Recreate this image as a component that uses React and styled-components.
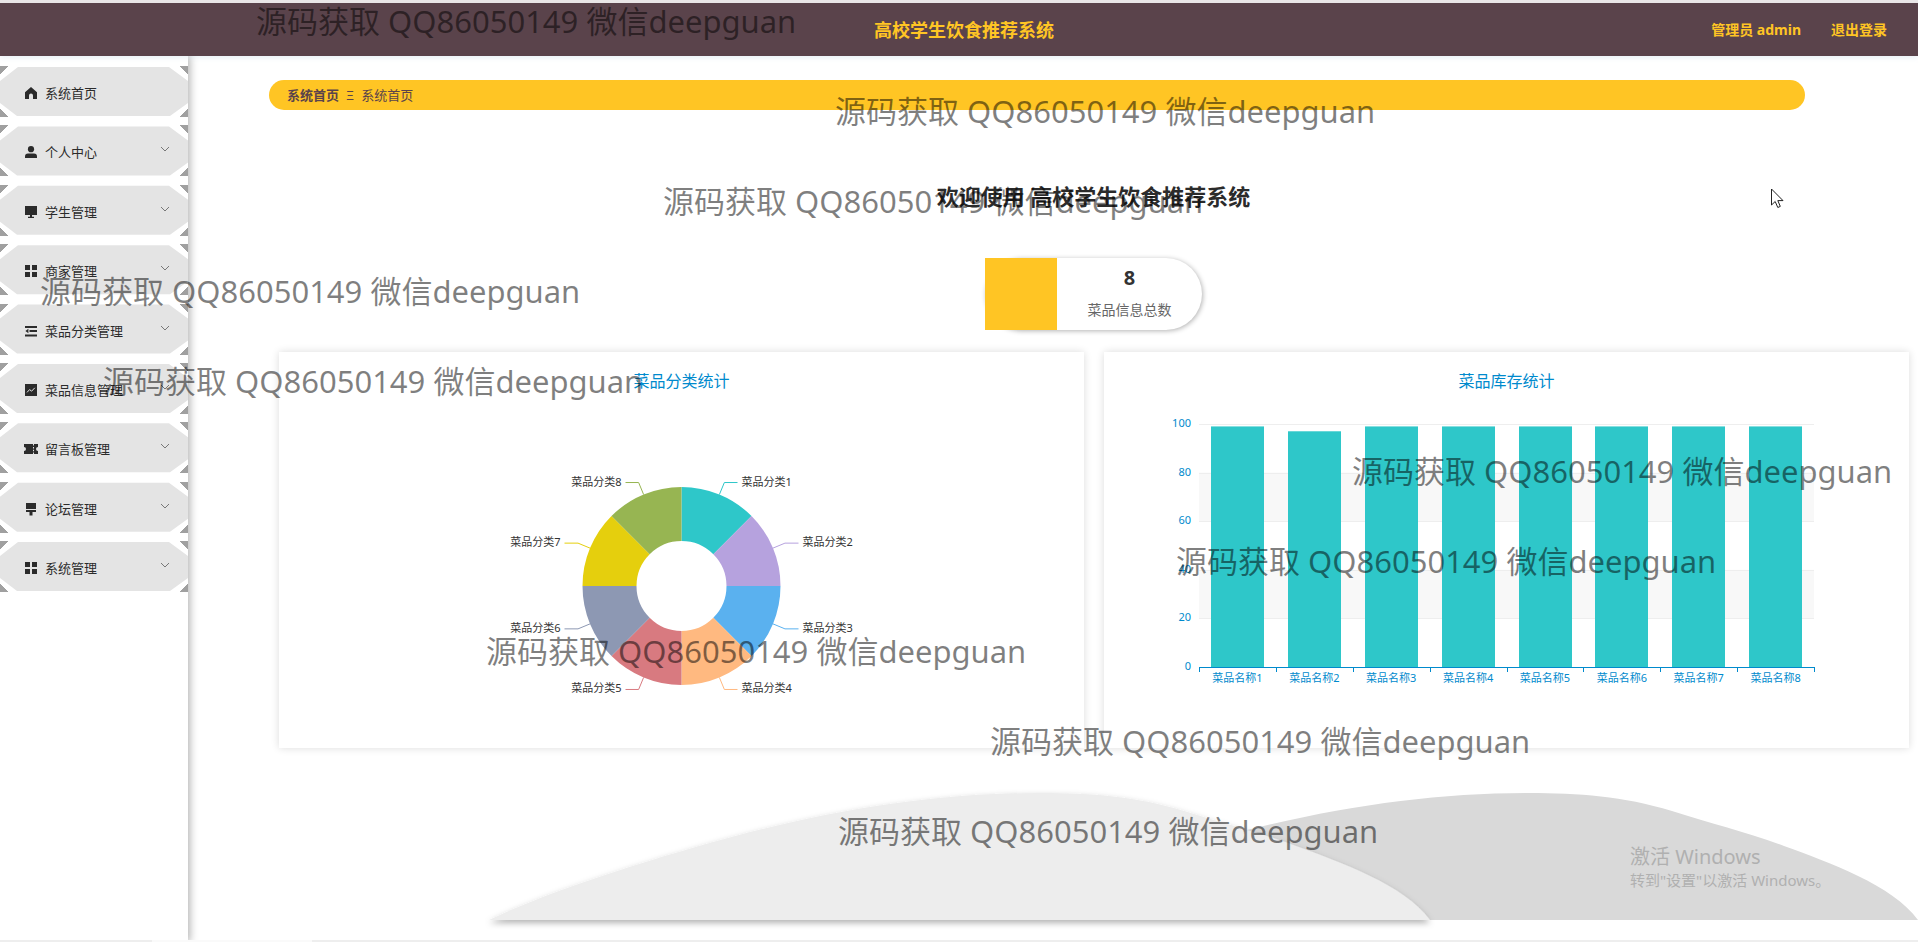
import React from "react";
import styled, { createGlobalStyle } from "styled-components";

const colors = {
  header: "#5a434b",
  accent: "#ffc524",
  axis: "#008acd",
  teal: "#2ec7c9",
};

const GlobalStyle = createGlobalStyle`
  *, *::before, *::after { box-sizing: border-box; }
  body {
    margin: 0;
    background: #fff;
    color: #333;
    font-family: "Noto Sans", "Noto Sans CJK SC", sans-serif;
    font-size: 13px;
  }
  h1, h2, p, ul, ol { margin: 0; padding: 0; }
  ul, ol { list-style: none; }
  a { color: inherit; text-decoration: none; }
`;

const Page = styled.div`
  position: relative;
  display: flex;
  flex-direction: column;
  min-height: 100vh;
  overflow: hidden;
`;

const Header = styled.header`
  display: grid;
  grid-template-columns: 1fr auto 1fr;
  align-items: center;
  height: 56px;
  padding: 0 31px 0 41px;
  border-top: 3px solid #e9e6e7;
  background: ${colors.header};
  color: ${colors.accent};
  font-weight: 700;
  box-shadow: 0 1px 6px rgba(120, 160, 200, 0.2);
`;

const SiteName = styled.p`
  grid-column: 2;
  font-size: 18px;
  line-height: 26px;
`;

const Account = styled.div`
  display: flex;
  justify-content: flex-end;
  gap: 30px;
  font-size: 14px;
  line-height: 20px;
`;

const Body = styled.div`
  display: flex;
  flex: 1;
`;

const Sidebar = styled.nav`
  flex: none;
  width: 188px;
  padding-top: 10px;
  box-shadow: 2px 0 8px rgba(0, 0, 0, 0.3);
  clip-path: inset(0 -12px 0 0);
`;

const Menu = styled.ul`
  display: flex;
  flex-direction: column;
  justify-content: space-between;
  height: 526px;
`;

const corner = (direction, place) =>
  `linear-gradient(to ${direction}, #a0a0a0 50%, transparent 50%) ${place} / 9px 8px no-repeat`;

const MenuButton = styled.button`
  position: relative;
  isolation: isolate;
  display: flex;
  align-items: center;
  gap: 8px;
  width: 100%;
  height: 51px;
  padding: 3px 18px 0 25px;
  border: 0;
  background:
    ${corner("bottom right", "left top")},
    ${corner("bottom left", "right top")},
    ${corner("top right", "left bottom")},
    ${corner("top left", "right bottom")};
  color: #2b2b2b;
  font: inherit;
  line-height: 20px;
  text-align: left;
  cursor: pointer;

  &::before {
    content: "";
    position: absolute;
    inset: 0;
    z-index: -1;
    background: #e4e4e4;
    clip-path: polygon(18px 1px, 169px 1px, 100% 15px, 100% 37px, 170px 50px, 17px 50px, 0 37px, 0 15px);
  }
`;

const MenuIcon = styled.svg`
  flex: none;
  width: 12px;
  height: 12px;
  fill: #2b2b2b;
`;

const Chevron = styled.svg`
  width: 10px;
  height: 6px;
  margin: 0 0 6px auto;
  fill: none;
  stroke: #777;
`;

const Main = styled.main`
  display: flex;
  flex: 1;
  flex-direction: column;
  min-width: 0;
  padding: 24px 0 8px 81px;
`;

const Breadcrumb = styled.ol`
  display: flex;
  align-items: center;
  gap: 7px;
  height: 30px;
  margin-right: 113px;
  padding: 0 18px;
  border-radius: 15px;
  background: ${colors.accent};
  color: ${colors.header};
  line-height: 20px;
`;

const Crumb = styled.li`
  font-weight: ${(p) => (p.$strong ? 700 : 400)};
`;

const Separator = styled.li`
  font-size: 13px;
`;

const Welcome = styled.h1`
  margin-top: 71px;
  font-size: 22px;
  line-height: 30px;
  text-align: center;
  color: #2b2b2b;
`;

const Stat = styled.section`
  display: flex;
  align-self: center;
  width: 217px;
  height: 72px;
  margin-top: 47px;
  border-radius: 36px;
  background: #fff;
  box-shadow: 1px 1px 5px rgba(0, 0, 0, 0.3);
`;

const StatBlock = styled.div`
  width: 72px;
  background: ${colors.accent};
`;

const StatText = styled.div`
  display: flex;
  flex: 1;
  flex-direction: column;
  justify-content: center;
  gap: 8px;
  text-align: center;
`;

const StatValue = styled.strong`
  font-size: 20px;
  line-height: 24px;
`;

const StatLabel = styled.span`
  color: #666;
  font-size: 14px;
  line-height: 24px;
`;

const Charts = styled.div`
  display: grid;
  grid-template-columns: 1fr 1fr;
  gap: 20px;
  margin-top: 22px;
  padding: 0 9px 0 10px;
`;

const ChartCard = styled.section`
  background: #fff;
  box-shadow: 0 0 8px rgba(0, 0, 0, 0.14);
`;

const ChartTitle = styled.h2`
  height: 60px;
  color: ${colors.axis};
  font-size: 16px;
  font-weight: 400;
  line-height: 58px;
  text-align: center;
`;

const Plot = styled.svg`
  display: block;
  width: 100%;
  height: auto;
  font-size: 11px;
`;

const Hills = styled.svg`
  display: block;
  align-self: flex-end;
  width: 100%;
  max-width: 1438px;
  height: auto;
  margin-top: 36px;
`;

const BottomEdge = styled.div`
  position: absolute;
  inset: auto 0 0;
  height: 2px;
  background: linear-gradient(to right, #eee 152px, #fafafa 152px 312px, #eee 312px);
`;

const Overlay = styled.div`
  position: absolute;
  inset: 0;
  overflow: hidden;
  pointer-events: none;
`;

const WatermarkLine = styled.p`
  height: 90px;
  padding-left: ${(p) => p.$indent}px;
  color: rgba(0, 0, 0, 0.5);
  font-size: 31px;
  line-height: 90px;
  white-space: nowrap;

  &:first-child {
    margin-top: -24px;
  }
`;

const Activation = styled.aside`
  position: absolute;
  right: 0;
  bottom: 52px;
  width: 288px;
  color: #b0b0b0;
  font-size: 15px;
  line-height: 20px;
`;

const ActivationTitle = styled.p`
  font-size: 20px;
  line-height: 26px;
`;

const Pointer = styled.svg`
  position: absolute;
  top: 188px;
  right: 134px;
  width: 13px;
  height: 21px;
`;

const icons = {
  home: <path d="M6 0 12 5.2V12H8V8.6a2 2 0 0 0-4 0V12H0V5.2Z" />,
  user: (
    <>
      <circle cx="6" cy="3.2" r="3.1" />
      <path d="M0 12V10.4Q0 7.4 3 7.4H9Q12 7.4 12 10.4V12Z" />
    </>
  ),
  platform: <path d="M0 0H12V9H7V10.8H9V12H3V10.8H5V9H0Z" />,
  grid: <path d="M0 0H5V5H0ZM7 0H12V5H7ZM0 7H5V12H0ZM7 7H12V12H7Z" />,
  fold: <path d="M0 1H12V3H0ZM4.5 5H12V7H4.5ZM0 9.4H12V11.4H0ZM3.4 3.8V8.2L.4 6Z" />,
  chart: (
    <>
      <path d="M0 0H12V12H0Z" />
      <path d="M2 8.4 4.6 5.6 6.6 7.2 9.8 3.8" fill="none" stroke="#e4e4e4" />
    </>
  ),
  ticket: (
    <path d="M-1 1H8V2.6H9V1H13V4Q11 4.200 11 6T13 8V11H9V9.4H8V11H-1V8Q1 7.800 1 6T-1 4ZM8 4V5.400H9V4ZM8 6.800V8.200H9V6.800Z" />
  ),
  brush: <path d="M1 0H11V6H1ZM1 7H11V9H7.500V12.400H4.500V9H1Z" />,
};

const menu = [
  { label: "系统首页", icon: "home", leaf: true },
  { label: "个人中心", icon: "user" },
  { label: "学生管理", icon: "platform" },
  { label: "商家管理", icon: "grid" },
  { label: "菜品分类管理", icon: "fold" },
  { label: "菜品信息管理", icon: "chart" },
  { label: "留言板管理", icon: "ticket" },
  { label: "论坛管理", icon: "brush" },
  { label: "系统管理", icon: "grid" },
];

const watermarkIndents = [256, 835, 663, 40, 103, 1352, 1176, 486, 990, 838];

const sliceColors = [
  "#2ec7c9", "#b6a2de", "#5ab1ef", "#ffb980",
  "#d87a80", "#8d98b3", "#e5cf0d", "#97b552",
];

const CX = 402.5;
const CY = 234;

const polar = (radius, turn) => {
  const angle = turn * 2 * Math.PI;
  return [CX + radius * Math.sin(angle), CY - radius * Math.cos(angle)];
};

function slicePath(index) {
  const [from, to] = [index / 8, (index + 1) / 8];
  return `M${polar(99, from)}A99 99 0 0 1 ${polar(99, to)}L${polar(45, to)}A45 45 0 0 0 ${polar(45, from)}Z`;
}

function Slice({ index, color }) {
  const middle = (index + 0.5) / 8;
  const side = index < 4 ? 1 : -1;
  const [startX, startY] = polar(99, middle);
  const [elbowX, elbowY] = polar(112, middle);
  const near = [0, 3, 4, 7].includes(index);
  const endX = CX + side * (near ? 56 : 117);
  return (
    <g>
      <path d={slicePath(index)} fill={color} />
      <path d={`M${startX} ${startY}L${elbowX} ${elbowY}H${endX}`} fill="none" stroke={color} />
      <text x={endX + side * 4} y={elbowY + 3} fill="#333" textAnchor={side > 0 ? "start" : "end"}>
        {`菜品分类${index + 1}`}
      </text>
    </g>
  );
}

function PieChart() {
  return (
    <Plot viewBox="0 60 805 336" role="img" aria-label="菜品分类统计">
      {sliceColors.map((color, index) => (
        <Slice key={color} index={index} color={color} />
      ))}
    </Plot>
  );
}

const stock = [99, 97, 99, 99, 99, 99, 99, 99];
const LEFT = 95;
const RIGHT = 710;
const BASE = 315;
const SCALE = 243 / 100;
const STEP = (RIGHT - LEFT) / stock.length;

function BarChart() {
  const yOf = (value) => BASE - value * SCALE;
  return (
    <Plot viewBox="0 60 805 336" role="img" aria-label="菜品库存统计">
      {[80, 40].map((value) => (
        <rect key={value} x={LEFT} y={yOf(value)} width={RIGHT - LEFT} height={20 * SCALE} fill="#f8f8f8" />
      ))}
      {[0, 20, 40, 60, 80, 100].map((value) => (
        <g key={value}>
          {value > 0 && <path d={`M${LEFT} ${Math.round(yOf(value)) + 0.5}H${RIGHT}`} stroke="#eee" />}
          <text x={LEFT - 8} y={yOf(value) + 3} fill={colors.axis} textAnchor="end">{value}</text>
        </g>
      ))}
      {stock.map((value, index) => (
        <g key={index}>
          <rect x={Math.round(LEFT + STEP * index + 12)} y={yOf(value)} width="53" height={value * SCALE} fill={colors.teal} />
          <text x={LEFT + STEP * (index + 0.5)} y={BASE + 15} fill={colors.axis} textAnchor="middle">
            {`菜品名称${index + 1}`}
          </text>
        </g>
      ))}
      <path d={`M${LEFT} ${BASE + 0.5}H${RIGHT}`} stroke={colors.axis} />
      {Array.from({ length: 9 }, (_, index) => (
        <path key={index} d={`M${Math.round(LEFT + STEP * index) + 0.5} ${BASE}v5`} stroke={colors.axis} />
      ))}
    </Plot>
  );
}

const hillPath =
  "M489 920C545 893 640 862 728 838C840 808 940 793 1040 793C1092 793 1134 796 1184 811C1225 824 1258 832 1296 846C1340 862 1405 885 1430 920Z";

export default function App() {
  return (
    <>
      <GlobalStyle />
      <Page>
        <Header>
          <SiteName>高校学生饮食推荐系统</SiteName>
          <Account>
            <span>管理员 admin</span>
            <a href="#logout">退出登录</a>
          </Account>
        </Header>
        <Body>
          <Sidebar>
            <Menu>
              {menu.map(({ label, icon, leaf }) => (
                <li key={label}>
                  <MenuButton type="button">
                    <MenuIcon viewBox="0 0 12 12" overflow="visible">{icons[icon]}</MenuIcon>
                    <span>{label}</span>
                    {!leaf && (
                      <Chevron viewBox="0 0 10 6">
                        <path d="M1 1 5 5 9 1" />
                      </Chevron>
                    )}
                  </MenuButton>
                </li>
              ))}
            </Menu>
          </Sidebar>
          <Main>
            <Breadcrumb>
              <Crumb $strong><a href="#home">系统首页</a></Crumb>
              <Separator>Ξ</Separator>
              <Crumb>系统首页</Crumb>
            </Breadcrumb>
            <Welcome>欢迎使用 高校学生饮食推荐系统</Welcome>
            <Stat>
              <StatBlock />
              <StatText>
                <StatValue>8</StatValue>
                <StatLabel>菜品信息总数</StatLabel>
              </StatText>
            </Stat>
            <Charts>
              <ChartCard>
                <ChartTitle>菜品分类统计</ChartTitle>
                <PieChart />
              </ChartCard>
              <ChartCard>
                <ChartTitle>菜品库存统计</ChartTitle>
                <BarChart />
              </ChartCard>
            </Charts>
            <Hills viewBox="480 784 1438 150" aria-hidden="true">
              <defs>
                <filter id="hill-shadow" x="-5%" y="-10%" width="110%" height="125%">
                  <feDropShadow dx="0" dy="3" stdDeviation="3" floodColor="#000" floodOpacity="0.3" />
                </filter>
              </defs>
              <path d={hillPath} transform="translate(488 0)" fill="#d9d9d9" />
              <path d={hillPath} fill="#ededed" filter="url(#hill-shadow)" />
            </Hills>
          </Main>
        </Body>
        <BottomEdge />
        <Overlay>
          <Activation>
            <ActivationTitle>激活 Windows</ActivationTitle>
            <p>转到"设置"以激活 Windows。</p>
          </Activation>
          <Pointer viewBox="0 0 13 21">
            <path d="M.5 1V17L4.200 13.500 6.800 19.500 9.300 18.400 6.800 12.600H12Z" fill="#fff" stroke="#222" />
          </Pointer>
        </Overlay>
        <Overlay>
          {watermarkIndents.map((indent) => (
            <WatermarkLine key={indent} $indent={indent}>源码获取 QQ86050149 微信deepguan</WatermarkLine>
          ))}
        </Overlay>
      </Page>
    </>
  );
}
